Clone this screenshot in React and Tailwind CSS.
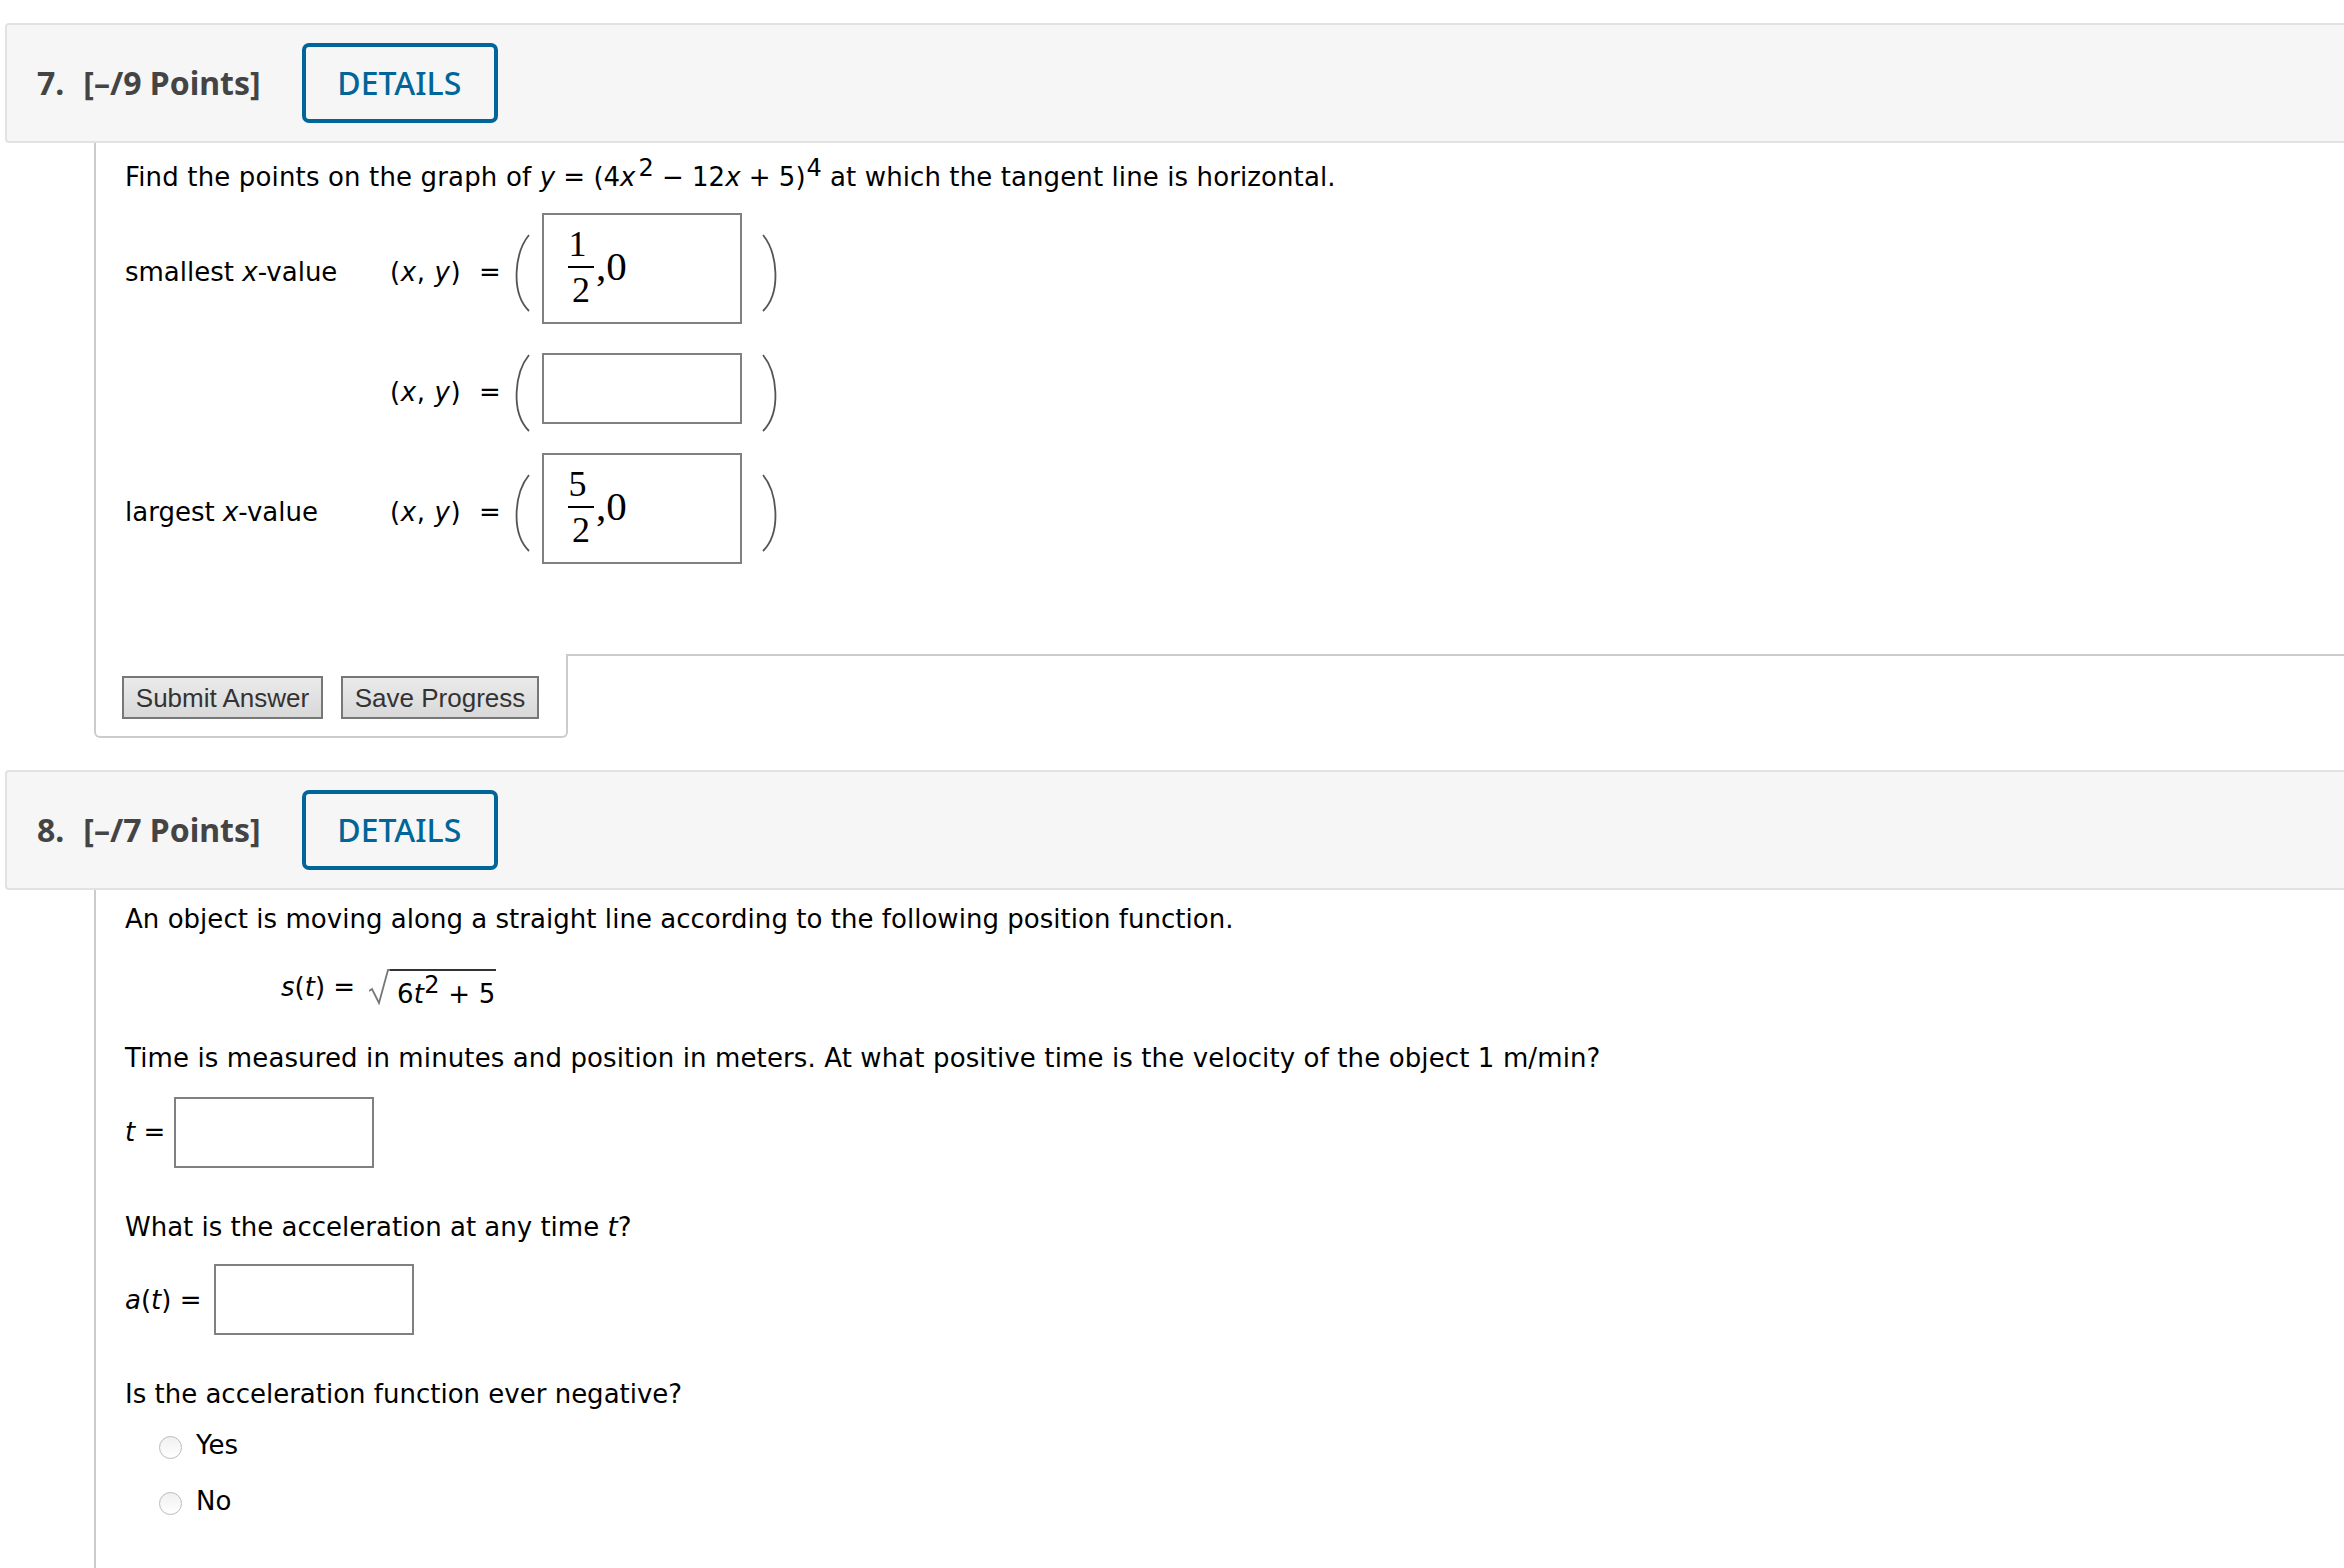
const body = "font-['DejaVu_Sans',Verdana,sans-serif]"

function Header({ num, points }) {
  return (
    <div className="ml-[5px] h-[120px] flex items-center border-2 border-r-0 border-[#e2e2e2] rounded-l-[4px] bg-[#f6f6f6] font-['Noto_Sans',sans-serif]">
      <span className="ml-[30px] text-[32px] font-bold text-[#444]">{num}.</span>
      <span className="ml-[19px] text-[32px] font-bold text-[#444] w-[219px] whitespace-nowrap">[–/{points} Points]</span>
      <button className="w-[196px] h-[80px] pr-[2px] border-[4px] border-[#006699] rounded-[7px] text-[32px] font-medium text-[#006699] bg-[#f6f6f6]">DETAILS</button>
    </div>
  )
}

function Paren({ right }) {
  return (
    <svg width="18" height="78" viewBox="0 0 18 78" className="shrink-0 -my-[10px] translate-y-[4px]">
      <path
        d={right ? "M1 1 C15 18 20 58 1 77" : "M17 1 C3 18 -2 58 17 77"}
        fill="none"
        stroke="#555"
        strokeWidth="1.8"
      />
    </svg>
  )
}

function Frac({ top }) {
  return (
    <div className="flex items-center pl-[24px] -translate-y-[2px] font-['Liberation_Serif',serif] text-black">
      <div className="flex flex-col items-center w-[26px] text-[36px] leading-[44px]">
        <span className="pr-[7px]">{top}</span>
        <span className="w-full h-[2px] bg-black"></span>
        <span>2</span>
      </div>
      <span className="text-[41px] leading-none ml-[2px]">,0</span>
    </div>
  )
}

function Row({ label, tall, children }) {
  return (
    <div className="flex items-center">
      <span className="w-[294px] pl-[29px] mt-[7px]">{label && <>{label} <i>x</i>-value</>}</span>
      <span className="w-[122px] mt-[7px] tracking-[0.6px]">(<i>x</i>, <i>y</i>)&nbsp; =</span>
      <Paren />
      <div className={`${tall ? "h-[111px]" : "h-[71px]"} w-[200px] ml-[12px] mr-[20px] border-2 border-[#808080] flex items-center`}>
        {children}
      </div>
      <Paren right />
    </div>
  )
}

function Box() {
  return <div className="h-[71px] w-[200px] border-2 border-[#808080]"></div>
}

function Radio({ label }) {
  return (
    <label className="flex items-center h-[56px] pl-[63px]">
      <input type="radio" className="appearance-none w-[23px] h-[23px] rounded-full border border-[#bbbbbb] bg-gradient-to-b from-[#f0f0f0] to-white" />
      <span className="ml-[14px] -mt-[3px]">{label}</span>
    </label>
  )
}

export default function App() {
  return (
    <div className={`h-[1568px] overflow-hidden bg-white pt-[23px] text-[26px] text-black ${body}`}>
      {/* Question 7 */}
      <Header num="7" points="9" />
      <div className="ml-[94px]">
        <div className="border-l-2 border-[#cccccc] pb-[90px]">
          <p className="pl-[29px] pt-[14px] h-[70px] leading-[40px] whitespace-nowrap">
            <span className="tracking-[0.15px]">Find the points on the graph of </span><i>y</i> = (4<i>x</i><sup className="ml-[3px] text-[24px] -top-[10px] leading-none">2</sup> − 12<i>x</i> + 5)<sup className="ml-[1px] text-[24px] -top-[10px] leading-none">4</sup> <span className="tracking-[0.1px]">at which the tangent line is horizontal.</span>
          </p>
          <div className="flex flex-col gap-[29px]">
            <Row label="smallest" tall><Frac top="1" /></Row>
            <Row />
            <Row label="largest" tall><Frac top="5" /></Row>
          </div>
        </div>
        <div className="flex">
          <div className="w-[474px] h-[84px] border-l-2 border-b-2 border-r-2 border-[#cccccc] rounded-b-[6px] pt-[22px] pl-[26px] flex items-start gap-[18px] font-['Liberation_Sans',sans-serif] text-[#333] text-[26px]">
            <button className="w-[201px] h-[43px] border-2 border-[#777] bg-gradient-to-b from-[#ebebeb] to-[#d8d8d8] leading-none">Submit Answer</button>
            <button className="w-[198px] h-[43px] border-2 border-[#777] bg-gradient-to-b from-[#ebebeb] to-[#d8d8d8] leading-none">Save Progress</button>
          </div>
          <div className="flex-1 border-t-2 border-[#cccccc]"></div>
        </div>
      </div>

      {/* Question 8 */}
      <div className="mt-[32px]">
        <Header num="8" points="7" />
      </div>
      <div className="ml-[94px] border-l-2 border-[#cccccc] pl-[29px] h-[700px]">
        <p className="pt-[9px] leading-[40px] whitespace-nowrap tracking-[0.035px]">An object is moving along a straight line according to the following position function.</p>
        <div className="mt-[21px] pl-[156px] flex items-start h-[50px]">
          <span className="mt-[8px]"><i>s</i>(<i>t</i>) = </span>
          <svg width="21" height="36" viewBox="0 0 21 36" className="ml-[14px] mt-[9px] shrink-0">
            <path d="M0 22 L3 20 L10 34 L19 1 L21 1" fill="none" stroke="#777" strokeWidth="1.8" />
          </svg>
          <span className="mt-[9px] border-t-2 border-[#333] pl-[7px] pr-[1px] leading-[34px] h-[40px] whitespace-nowrap tracking-[0.2px]"><span className="relative top-[6px]">6<i>t</i><sup className="text-[24px] -top-[10px] leading-none">2</sup> + 5</span></span>
        </div>
        <p className="mt-[28px] leading-[40px] whitespace-nowrap tracking-[0.115px]">Time is measured in minutes and position in meters. At what positive time is the velocity of the object 1 m/min?</p>
        <div className="mt-[19px] flex items-center gap-[9px]">
          <span><i>t</i> =</span>
          <Box />
        </div>
        <p className="mt-[39px] leading-[40px] whitespace-nowrap">What is the acceleration at any time <i>t</i>?</p>
        <div className="mt-[17px] flex items-center gap-[12px]">
          <span className="mt-[2px]"><i>a</i>(<i>t</i>) =</span>
          <Box />
        </div>
        <p className="mt-[39px] leading-[40px]">Is the acceleration function ever negative?</p>
        <div className="-ml-[29px] mt-[5px] flex flex-col">
          <Radio label="Yes" />
          <Radio label="No" />
        </div>
      </div>
    </div>
  )
}
